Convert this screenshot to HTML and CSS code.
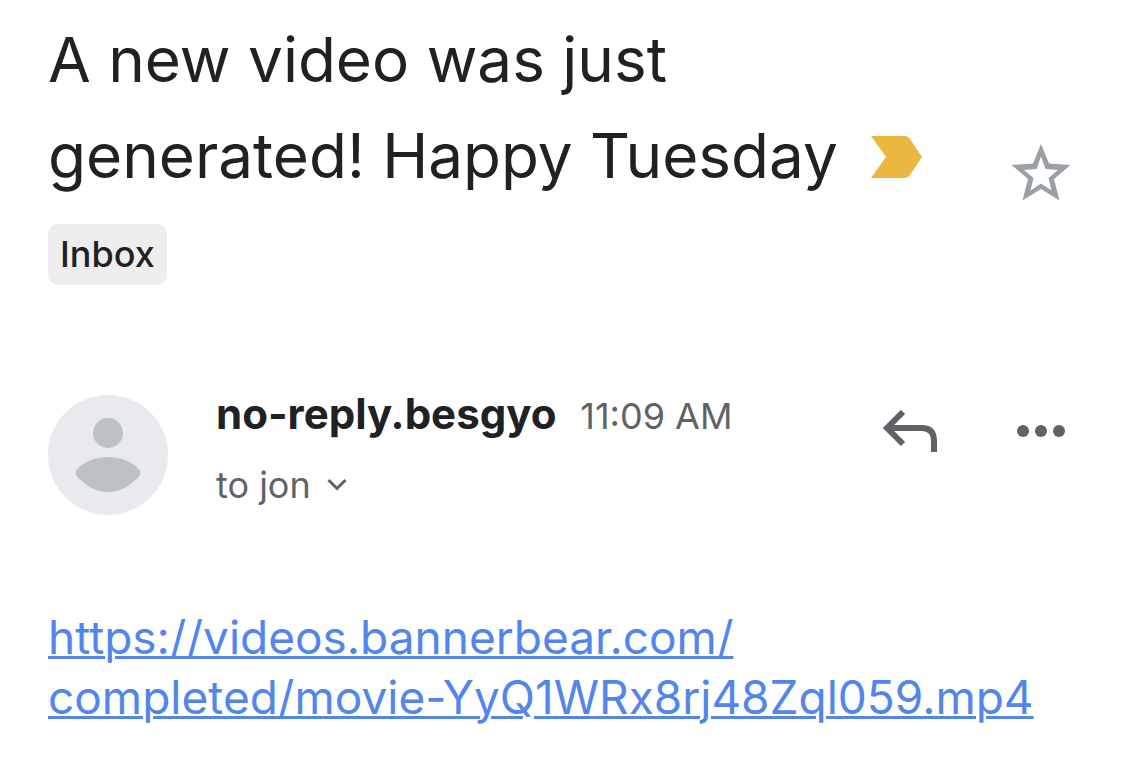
FILE: index.html
```html
<!DOCTYPE html>
<html lang="en">

<head>
    <meta charset="utf-8">
    <meta name="viewport" content="width=device-width, initial-scale=1.0">
    <title>A new video was just generated!</title>
    <link rel="stylesheet" href="styles.css">
</head>

<body>
    <main class="mail">
        <header class="subject">
            <div class="subject-text">
                <h1>A new video was just generated! Happy Tuesday
                    <svg class="marker" viewBox="0 0 51 42" aria-hidden="true">
                        <path d="M0 0h34q3 0 5 3l12 18-12 18q-2 3-5 3H0l15-21z" fill="#ebb740" />
                    </svg>
                </h1>
                <button class="label">Inbox</button>
            </div>
            <button class="icon-button star" aria-label="Star">
                <svg width="60" height="58" viewBox="0 0 60 58">
                    <path fill="#9aa0a6" fill-rule="evenodd" d="M30 1l8 19.500 21.500 1.500-16.500 14 5.500 21.500L30 46 11.500 57.500 17 36 .5 22 22 20.500zM30 13.500L25.500 26 13 27l9.500 8-3 12.500L30 40.500l10.500 7-3-12.500 9.500-8-12.500-1z" />
                </svg>
            </button>
        </header>

        <section class="sender">
            <svg class="avatar" viewBox="0 0 120 120" role="img" aria-label="Profile picture">
                <circle cx="60" cy="60" r="60" fill="#e8eaed" />
                <circle cx="60" cy="38" r="15" fill="#bdc1c6" />
                <path d="M28 76c6-9 19-14 32-14s26 5 32 14q1 2 0 4C83 91 72 97 60 97s-23-6-32-17q-1-2 0-4z" fill="#bdc1c6" />
            </svg>
            <div class="details">
                <p class="from"><strong>no-reply.besgyo</strong> <time>11:09 AM</time></p>
                <button class="recipient">to jon
                    <svg width="20" height="14" viewBox="0 0 20 14" aria-hidden="true">
                        <path d="M1.500 2l8.500 8.500L18.500 2" fill="none" stroke="#5f6368" stroke-width="3" />
                    </svg>
                </button>
            </div>
            <div class="actions">
                <button class="icon-button" aria-label="Reply">
                    <svg width="54" height="42" viewBox="0 0 54 42">
                        <path d="M20 2L4 18l16 16M4 18h35q12 0 12 13v11" fill="none" stroke="#5f6368" stroke-width="6" />
                    </svg>
                </button>
                <button class="icon-button" aria-label="More">
                    <svg width="48" height="12" viewBox="0 0 48 12">
                        <g fill="#5f6368">
                            <circle cx="6" cy="6" r="6" />
                            <circle cx="24" cy="6" r="6" />
                            <circle cx="42" cy="6" r="6" />
                        </g>
                    </svg>
                </button>
            </div>
        </section>

        <p class="message">
            <a href="https://videos.bannerbear.com/completed/movie-YyQ1WRx8rj48Zql059.mp4">https://videos.bannerbear.com/<wbr><span class="file">completed/movie-YyQ1WRx8rj48Zql059.mp4</span></a>
        </p>
    </main>
</body>

</html>
```
FILE: styles.css
```css
* {
    margin: 0;
    padding: 0;
    box-sizing: border-box;
}

body {
    font-family: Inter, "Liberation Sans", sans-serif;
    color: #202124;
    background-color: #ffffff;
}

button {
    font-family: inherit;
    color: inherit;
    background: none;
    border: none;
    cursor: pointer;
}

svg {
    display: block;
}

.mail {
    padding: 12px 48px 48px;
}

.subject {
    display: flex;
    justify-content: space-between;
    align-items: center;
    gap: 48px;
}

h1 {
    font-size: 62px;
    line-height: 96px;
    font-weight: 400;
}

.marker {
    display: inline-block;
    width: 51px;
    height: 42px;
    margin-left: 16px;
}

.label {
    margin-top: 20px;
    padding: 0 12px;
    border-radius: 10px;
    background-color: #eeeeee;
    font-size: 36px;
    line-height: 61px;
    font-weight: 500;
}

.icon-button {
    flex: none;
}

.star {
    margin-right: 6px;
    margin-top: 46px;
}

.sender {
    display: flex;
    margin-top: 110px;
}

.avatar {
    flex: none;
    width: 120px;
    height: 120px;
    margin-right: 48px;
}

.from {
    font-size: 42px;
    line-height: 38px;
}

time {
    margin-left: 12px;
    font-size: 36px;
    color: #5f6368;
}

.recipient {
    display: flex;
    align-items: center;
    gap: 16px;
    margin-top: 28px;
    font-size: 36px;
    line-height: 44px;
    color: #5f6368;
}

.actions {
    display: flex;
    align-items: center;
    gap: 80px;
    height: 72px;
    margin-left: auto;
    margin-right: 12px;
}

.message {
    margin-top: 92px;
    font-size: 46px;
    line-height: 60px;
}

.message a {
    color: #5286ec;
    text-decoration-thickness: 3px;
}

.file {
    white-space: nowrap;
}
```
